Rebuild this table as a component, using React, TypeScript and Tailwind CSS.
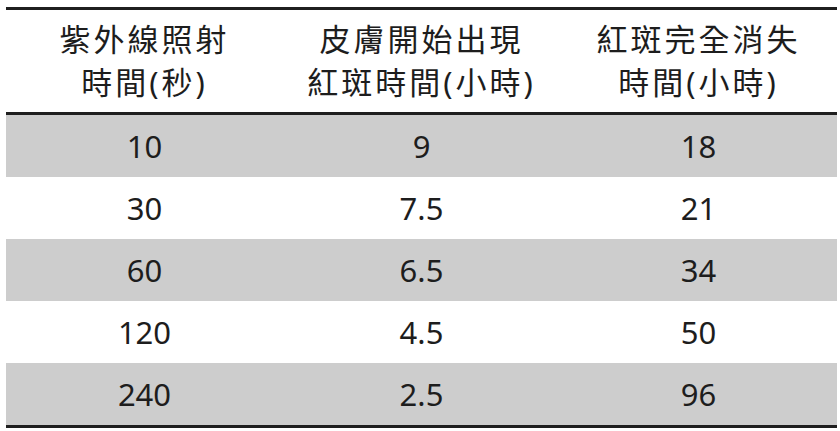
const rows = [
  ["10", "9", "18"],
  ["30", "7.5", "21"],
  ["60", "6.5", "34"],
  ["120", "4.5", "50"],
  ["240", "2.5", "96"],
];

const headers = [
  ["紫外線照射", "時間(秒)"],
  ["皮膚開始出現", "紅斑時間(小時)"],
  ["紅斑完全消失", "時間(小時)"],
];

export default function App() {
  return (
    <div
      className="min-h-screen bg-white pt-[7px] pl-[6px] text-[#1d1d1d]"
      style={{ fontFamily: '"Noto Sans", "Noto Sans CJK TC", sans-serif' }}
    >
      <div className="w-[831px] border-y-[3px] border-[#1f1f1f]">
        <div className="grid h-[105px] grid-cols-3 border-b-[3px] border-[#1f1f1f]">
          {headers.map((h, i) => (
            <div key={i} className="flex flex-col items-center justify-center text-[31px] leading-[43px] tracking-[3px]">
              <span>{h[0]}</span>
              <span>{h[1]}</span>
            </div>
          ))}
        </div>
        {rows.map((r, i) => (
          <div
            key={i}
            className={`grid h-[62px] grid-cols-3 items-center text-center text-[31px] ${i % 2 === 0 ? "bg-[#cdcdcd]" : "bg-white"}`}
          >
            {r.map((v, j) => (
              <span key={j}>{v}</span>
            ))}
          </div>
        ))}
      </div>
    </div>
  );
}
